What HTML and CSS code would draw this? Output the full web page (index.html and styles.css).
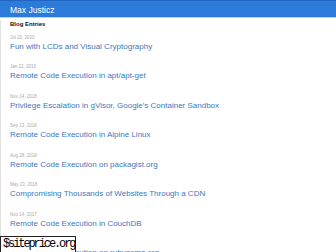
FILE: index.html
```html
<!DOCTYPE html>
<html lang="en">
  <head>
    <meta charset="UTF-8" />
    <meta name="viewport" content="width=device-width, initial-scale=1.0" />
    <title>Max Justicz</title>
    <link rel="stylesheet" href="styles.css">
  </head>
  <body>
    <div class="header">Max Justicz</div>

    <div class="content">
      <h2>Blog Entries</h2>

      <div class="entry">
        <div class="date">Jul 20, 2020</div>
        <a class="title" href="#">Fun with LCDs and Visual Cryptography</a>
      </div>
      <div class="entry">
        <div class="date">Jan 22, 2019</div>
        <a class="title" href="#">Remote Code Execution in apt/apt-get</a>
      </div>
      <div class="entry">
        <div class="date">Nov 14, 2018</div>
        <a class="title" href="#">Privilege Escalation in gVisor, Google's Container Sandbox</a>
      </div>
      <div class="entry">
        <div class="date">Sep 13, 2018</div>
        <a class="title" href="#">Remote Code Execution in Alpine Linux</a>
      </div>
      <div class="entry">
        <div class="date">Aug 28, 2018</div>
        <a class="title" href="#">Remote Code Execution on packagist.org</a>
      </div>
      <div class="entry">
        <div class="date">May 23, 2018</div>
        <a class="title" href="#">Compromising Thousands of Websites Through a CDN</a>
      </div>
      <div class="entry">
        <div class="date">Nov 14, 2017</div>
        <a class="title" href="#">Remote Code Execution in CouchDB</a>
      </div>
      <div class="entry">
        <div class="date">Oct 9, 2017</div>
        <a class="title" href="#">Remote Code Execution on rubygems.org</a>
      </div>
    </div>

    <div class="stamp">$siteprice.org</div>
  </body>
</html>
```

FILE: styles.css
```css
body {
  margin: 0;
  background-color: #fff;
  font-family: "Liberation Sans", Arial, sans-serif;
  overflow: hidden;
}

.header {
  height: 17px;
  line-height: 18px;
  padding-left: 10px;
  background-color: #2c7bdb;
  border-top: 1px solid #1f66c2;
  border-bottom: 1px solid #b7d3f3;
  box-sizing: border-box;
  height: 18px;
  color: #fff;
  font-size: 8.5px;
}

.content {
  padding: 0 0 0 10px;
  border-left: 1px solid #e2e2e2;
  margin-left: 0;
}

h2 {
  margin: 2px 0 0 -1px;
  font-size: 6px;
  line-height: 8px;
  font-weight: bold;
  color: #111;
  padding-bottom: 6.5px;
}

.entry {
  margin-left: -1px;
  height: 29.5px;
}

.date {
  font-size: 4.5px;
  line-height: 5px;
  color: #aaa;
  margin-bottom: 2px;
}

.title {
  display: block;
  font-size: 8px;
  line-height: 10px;
  color: #3b78c3;
  text-decoration: none;
  white-space: nowrap;
}

/* watermark over the bottom corner */
.stamp {
  position: absolute;
  left: 0;
  top: 236px;
  width: 76px;
  height: 24px;
  border: 1px solid #222;
  background-color: #fff;
  font-family: "Liberation Mono", monospace;
  font-size: 12px;
  letter-spacing: -2.1px;
  line-height: 15px;
  padding-left: 2px;
  box-sizing: border-box;
  color: #000;
}
```
